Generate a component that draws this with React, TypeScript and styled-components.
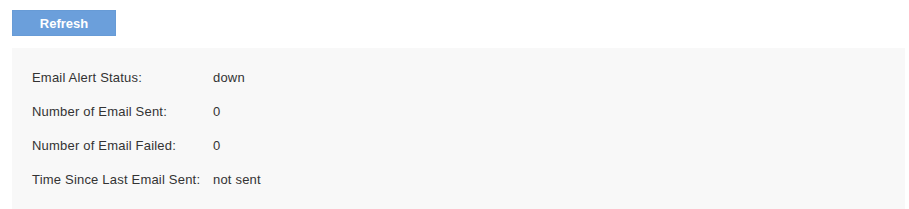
import React from 'react';
import styled, { createGlobalStyle } from 'styled-components';

const GlobalStyle = createGlobalStyle`
  body {
    margin: 0;
    background: #fff;
    font-family: "Liberation Sans", Arial, sans-serif;
  }
`;

const Page = styled.div`
  padding: 10px 4px 0 12px;
`;

const RefreshButton = styled.button`
  width: 104px;
  height: 26px;
  background-color: #6b9fdb;
  border: 1px solid #679bd6;
  color: #fff;
  font-family: "Liberation Sans", Arial, sans-serif;
  font-size: 13px;
  font-weight: bold;
  padding: 0;
  cursor: pointer;
  display: block;
`;

const Panel = styled.div`
  box-sizing: border-box;
  margin-top: 12px;
  height: 161px;
  background-color: #f8f8f8;
  padding: 12px 20px 0;
`;

const Row = styled.div`
  display: grid;
  grid-template-columns: 181px 1fr;
  height: 34px;
  align-items: center;
  font-size: 13px;
  letter-spacing: 0.2px;
  color: #333;
`;

const Label = styled.span``;

const Value = styled.span``;

const stats = [
  { label: 'Email Alert Status:', value: 'down' },
  { label: 'Number of Email Sent:', value: '0' },
  { label: 'Number of Email Failed:', value: '0' },
  { label: 'Time Since Last Email Sent:', value: 'not sent' },
];

function App() {
  return (
    <>
      <GlobalStyle />
      <Page>
        <RefreshButton>Refresh</RefreshButton>
        <Panel>
          {stats.map((s) => (
            <Row key={s.label}>
              <Label>{s.label}</Label>
              <Value>{s.value}</Value>
            </Row>
          ))}
        </Panel>
      </Page>
    </>
  );
}

export default App;
